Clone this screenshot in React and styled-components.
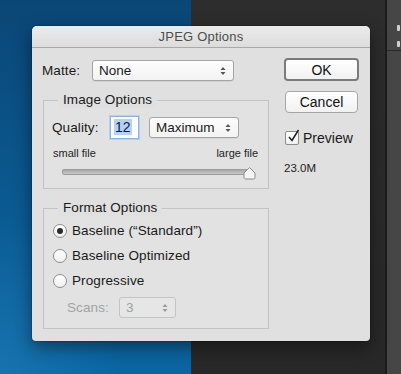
import styled, { createGlobalStyle } from 'styled-components'

const Global = createGlobalStyle`
  html, body { margin: 0; padding: 0; }
  body {
    width: 401px;
    height: 374px;
    overflow: hidden;
    font-family: "Liberation Sans", Arial, sans-serif;
    font-size: 13px;
    color: #1a1a1a;
  }
`

const Desktop = styled.div`
  position: relative;
  display: flex;
  width: 401px;
  height: 374px;
`

const BluePane = styled.div`
  width: 191px;
  background:
    radial-gradient(ellipse 120px 160px at 0% 100%, rgba(40, 130, 190, 0.45), rgba(40, 130, 190, 0) 100%),
    linear-gradient(180deg, #0b4676 0%, #0a5a91 55%, #0a66a2 100%);
`

const DarkPane = styled.div`
  flex: 1;
  background: linear-gradient(180deg, #2d2d2d 0%, #282828 100%);
`

const SideStrip = styled.div`
  width: 14px;
  border-left: 2px solid #1c1c1c;
  background: #464646;
  display: flex;
  flex-direction: column;
`

const StripHead = styled.div`
  height: 51px;
  border-bottom: 1px solid #2a2a2a;
  padding: 25px 0 0 10px;
  box-sizing: border-box;
  display: flex;
  flex-direction: column;
  gap: 10px;
`

const Mark = styled.span`
  display: block;
  width: 3px;
  height: 6px;
  background: #d0d0d0;
  border-radius: 1px;
`

const Dialog = styled.div`
  position: absolute;
  left: 32px;
  top: 26px;
  width: 338px;
  height: 315px;
  background: #e0e0e0;
  border-radius: 5px 5px 4px 4px;
  box-shadow: 0 6px 18px rgba(0, 0, 0, 0.45), 0 0 0 1px rgba(0, 0, 0, 0.15);
  overflow: hidden;
  display: flex;
  flex-direction: column;
`

const TitleBar = styled.div`
  height: 21px;
  border-bottom: 1px solid #a9a9a9;
  background: linear-gradient(180deg, #ebebeb 0%, #dcdcdc 100%);
  display: flex;
  align-items: center;
  justify-content: center;
  color: #4d4d4d;
  font-size: 13px;
  letter-spacing: 0.2px;
`

const Body = styled.div`
  display: flex;
  gap: 15px;
  padding: 10px 0 0 10px;
`

const LeftCol = styled.div`
  width: 227px;
  padding-top: 2px;
  display: flex;
  flex-direction: column;
`

const RightCol = styled.div`
  width: 75px;
  display: flex;
  flex-direction: column;
  align-items: flex-start;
`

const Row = styled.div`
  display: flex;
  align-items: center;
  height: ${(p) => p.$h || 21}px;
  padding-left: ${(p) => p.$pl || 0}px;
  margin-top: ${(p) => p.$mt || 0}px;
`

const Label = styled.span`
  width: ${(p) => p.$w}px;
  color: ${(p) => (p.$disabled ? '#a3a3a3' : '#1a1a1a')};
  font-size: 13.5px;
  letter-spacing: 0.1px;
`

const Select = styled.div`
  box-sizing: border-box;
  width: ${(p) => p.$w}px;
  height: 21px;
  display: flex;
  align-items: center;
  justify-content: space-between;
  padding: 0 7px 0 6px;
  border: 1px solid ${(p) => (p.$disabled ? '#c4c4c4' : '#a4a4a4')};
  border-radius: 3px;
  background: ${(p) =>
    p.$disabled ? '#e6e6e6' : 'linear-gradient(180deg, #fdfdfd 0%, #f3f3f3 100%)'};
  box-shadow: ${(p) => (p.$disabled ? 'none' : '0 1px 0 rgba(0,0,0,0.06)')};
  color: ${(p) => (p.$disabled ? '#a0a0a0' : '#1a1a1a')};
  font-size: 13.5px;
`

const Arrows = ({ color = '#555' }) => (
  <svg width="6" height="10" viewBox="0 0 6 10">
    <path d="M0.5 4 L3 1 L5.5 4 Z" fill={color} />
    <path d="M0.5 6 L3 9 L5.5 6 Z" fill={color} />
  </svg>
)

const Group = styled.div`
  position: relative;
  box-sizing: border-box;
  margin-left: 1px;
  width: 226px;
  height: ${(p) => p.$h}px;
  margin-top: ${(p) => p.$mt}px;
  border: 1px solid #c3c3c3;
  background: #e2e2e2;
`

const Legend = styled.span`
  position: absolute;
  left: 14px;
  top: -9px;
  padding: 0 5px;
  background: #e0e0e0;
  font-size: 13.5px;
  letter-spacing: 0.1px;
  line-height: 16px;
`

const NumInput = styled.div`
  box-sizing: border-box;
  width: 29px;
  height: 23px;
  padding: 2px 0 0 3px;
  background: #fff;
  border: 1px solid #8fb4e4;
  box-shadow: 0 0 0 1px #b4cff0;
  margin-right: 10px;
  font-size: 14px;
  span {
    background: #b2d2fb;
    padding: 0 1px;
  }
`

const Scale = styled.div`
  display: flex;
  justify-content: space-between;
  padding: 0 10px 0 9px;
  margin-top: 8px;
  font-size: 11px;
  color: #222;
  line-height: 13px;
`

const Slider = styled.div`
  position: relative;
  margin: 6px 0 0 18px;
  width: 188px;
  height: 14px;
`

const Track = styled.div`
  position: absolute;
  top: 3px;
  left: 0;
  right: 0;
  height: 4px;
  border-radius: 2px;
  border: 1px solid #9c9c9c;
  background: linear-gradient(180deg, #a8a8a8 0%, #c8c8c8 100%);
`

const Thumb = styled.svg`
  position: absolute;
  left: 181px;
  top: 0;
`

const RadioRow = styled.div`
  display: flex;
  align-items: center;
  height: 25px;
  padding-left: 9px;
  font-size: 13.5px;
  letter-spacing: 0.1px;
`

const RadioDot = styled.span`
  box-sizing: border-box;
  width: 14px;
  height: 14px;
  border-radius: 50%;
  border: 1px solid #8e8e8e;
  background: linear-gradient(180deg, #ffffff 0%, #f0f0f0 100%);
  margin-right: 5px;
  display: flex;
  align-items: center;
  justify-content: center;
  &::after {
    content: '';
    display: ${(p) => (p.$on ? 'block' : 'none')};
    width: 6px;
    height: 6px;
    border-radius: 50%;
    background: #2a2a2a;
  }
`

const Button = styled.div`
  box-sizing: border-box;
  width: ${(p) => p.$w}px;
  height: ${(p) => p.$h}px;
  margin-left: ${(p) => p.$ml || 0}px;
  margin-top: ${(p) => p.$mt || 0}px;
  display: flex;
  align-items: center;
  justify-content: center;
  border-radius: 4px;
  border: ${(p) => (p.$primary ? '2px solid #7b7b7b' : '1px solid #a6a6a6')};
  background: linear-gradient(180deg, #ffffff 0%, #f1f1f1 100%);
  font-size: 14px;
  color: #111;
`

const Check = styled.label`
  display: flex;
  align-items: center;
  margin: 17px 0 0 1px;
  font-size: 14px;
  gap: 4px;
`

const Box = styled.span`
  position: relative;
  box-sizing: border-box;
  width: 14px;
  height: 14px;
  border: 1px solid #8c8c8c;
  border-radius: 2px;
  background: linear-gradient(180deg, #ffffff 0%, #f0f0f0 100%);
  svg {
    position: absolute;
    left: 1px;
    top: -3px;
  }
`

const Size = styled.div`
  margin-top: 16px;
  font-size: 11.5px;
  color: #222;
`

export default function App() {
  return (
    <>
      <Global />
      <Desktop>
        <BluePane />
        <DarkPane />
        <SideStrip>
          <StripHead>
            <Mark />
            <Mark />
          </StripHead>
        </SideStrip>

        <Dialog>
          <TitleBar>JPEG Options</TitleBar>
          <Body>
            <LeftCol>
              <Row>
                <Label $w={50}>Matte:</Label>
                <Select $w={142}>
                  None
                  <Arrows />
                </Select>
              </Row>

              <Group $h={89} $mt={19}>
                <Legend>Image Options</Legend>
                <Row $h={23} $pl={8} $mt={15}>
                  <Label $w={58}>Quality:</Label>
                  <NumInput>
                    <span>12</span>
                  </NumInput>
                  <Select $w={90}>
                    Maximum
                    <Arrows />
                  </Select>
                </Row>
                <Scale>
                  <span>small file</span>
                  <span>large file</span>
                </Scale>
                <Slider>
                  <Track />
                  <Thumb width="13" height="14" viewBox="0 0 13 14">
                    <path
                      d="M1 7 L6.5 1.5 L12 7 L12 11.5 Q12 13 10.5 13 L2.5 13 Q1 13 1 11.5 Z"
                      fill="#f4f4f4"
                      stroke="#8a8a8a"
                      strokeWidth="1"
                    />
                  </Thumb>
                </Slider>
              </Group>

              <Group $h={121} $mt={19}>
                <Legend>Format Options</Legend>
                <div style={{ height: 9 }} />
                <RadioRow>
                  <RadioDot $on />
                  Baseline (“Standard”)
                </RadioRow>
                <RadioRow>
                  <RadioDot />
                  Baseline Optimized
                </RadioRow>
                <RadioRow>
                  <RadioDot />
                  Progressive
                </RadioRow>
                <Row $pl={23} $mt={4}>
                  <Label $w={52} $disabled>
                    Scans:
                  </Label>
                  <Select $w={57} $disabled>
                    3
                    <Arrows color="#9a9a9a" />
                  </Select>
                </Row>
              </Group>
            </LeftCol>

            <RightCol>
              <Button $w={75} $h={23} $primary>
                OK
              </Button>
              <Button $w={73} $h={22} $ml={1} $mt={10}>
                Cancel
              </Button>
              <Check>
                <Box>
                  <svg width="13" height="14" viewBox="0 0 13 14">
                    <path d="M2 8 L5 11.5 L11.5 1" fill="none" stroke="#222" strokeWidth="1.6" />
                  </svg>
                </Box>
                Preview
              </Check>
              <Size>23.0M</Size>
            </RightCol>
          </Body>
        </Dialog>
      </Desktop>
    </>
  )
}
